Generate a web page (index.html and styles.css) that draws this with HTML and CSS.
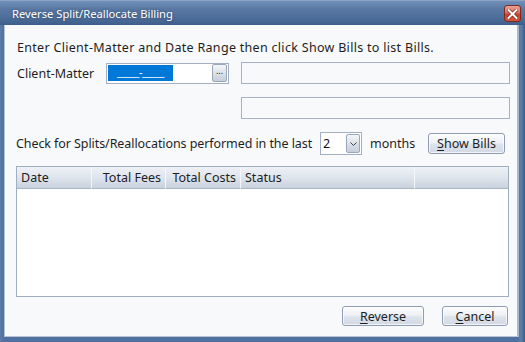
FILE: index.html
```html
<!DOCTYPE html>
<html lang="en">
<head>
    <meta charset="UTF-8">
    <title>Reverse Split/Reallocate Billing</title>
    <link rel="stylesheet" href="styles.css">
</head>
<body>
    <div class="window">
        <div class="titlebar">
            <span class="title">Reverse Split/Reallocate Billing</span>
            <span class="close">
                <svg width="11" height="10" viewBox="0 0 11 10">
                    <path d="M1.5 1 L9.5 9 M9.5 1 L1.5 9" stroke="#7a2418" stroke-width="3.4" stroke-linecap="square"/>
                    <path d="M1.5 1 L9.5 9 M9.5 1 L1.5 9" stroke="#fff" stroke-width="2" stroke-linecap="square"/>
                </svg>
            </span>
        </div>
        <div class="frame">
            <div class="content">
                <p class="intro">Enter Client-Matter and Date Range then click Show Bills to list Bills.</p>

                <div class="matter-row">
                    <span class="label">Client-Matter</span>
                    <div class="matter-input">
                        <span class="selection">_____-_____</span>
                        <span class="ellipsis">...</span>
                    </div>
                    <div class="textbox"></div>
                </div>

                <div class="second-row">
                    <div class="textbox"></div>
                </div>

                <div class="check-row">
                    <span class="check-label">Check for Splits/Reallocations performed in the last</span>
                    <div class="combo">
                        <span class="combo-value">2</span>
                        <span class="combo-drop">
                            <svg width="7" height="4" viewBox="0 0 7 4">
                                <path d="M0.5 0.5 L3.5 3.5 L6.5 0.5" fill="none" stroke="#3a4250" stroke-width="1"/>
                            </svg>
                        </span>
                    </div>
                    <span class="months">months</span>
                    <button class="btn btn-show"><u>S</u>how Bills</button>
                </div>

                <div class="listview">
                    <div class="lv-header">
                        <div class="col col-date">Date</div>
                        <div class="col col-fees">Total Fees</div>
                        <div class="col col-costs">Total Costs</div>
                        <div class="col col-status">Status</div>
                        <div class="col col-fill"></div>
                    </div>
                    <div class="lv-body"></div>
                </div>

                <div class="actions">
                    <button class="btn btn-reverse"><u>R</u>everse</button>
                    <button class="btn btn-cancel"><u>C</u>ancel</button>
                </div>
            </div>
        </div>
    </div>
</body>
</html>
```

FILE: styles.css
```css
body {
    margin: 0;
    font-family: "Noto Sans", "Open Sans", sans-serif;
    font-size: 12.5px;
    color: #1e1e1e;
}
.window {
    width: 525px;
    height: 342px;
    display: flex;
    flex-direction: column;
    background: #3f5f8c;
}
.titlebar {
    height: 25px;
    display: flex;
    align-items: center;
    justify-content: space-between;
    padding: 0 4px 0 12px;
    box-sizing: border-box;
    background: linear-gradient(#7290b8 0%, #5878a3 35%, #46669343 100%), linear-gradient(#5b7aa5, #3a5a88);
    border-top: 1px solid #8aa3c4;
}
.title {
    color: #fff;
    font-size: 11.2px;
    text-shadow: 0 0 3px rgba(20, 40, 70, 0.6);
    margin-top: 1px;
}
.close {
    width: 17px;
    height: 17px;
    border: 1px solid #7d2a20;
    border-radius: 3px;
    box-sizing: border-box;
    display: flex;
    align-items: center;
    justify-content: center;
    background: linear-gradient(#eba095 0%, #df6f60 45%, #c8402e 55%, #d0563f 100%);
    margin-top: 1px;
}
.frame {
    flex: 1;
    display: flex;
    padding: 0 6px 5px 4px;
    background: linear-gradient(90deg, #5c7ca6 0px, #5070a0 4px, #5070a0 calc(100% - 7px), #6080aa calc(100% - 4px), #3b5b89 100%);
}
.content {
    flex: 1;
    background: #f8f9fb;
    border-left: 1px solid #b4c2d6;
    border-right: 2px solid #a9b8cc;
    border-bottom: 1px solid #b8c5d6;
    padding: 15px 7px 0 11px;
    display: flex;
    flex-direction: column;
}
.intro {
    margin: 0 0 0 1px;
    line-height: 15px;
    height: 15px;
    letter-spacing: 0.3px;
    white-space: nowrap;
}
.matter-row {
    display: flex;
    align-items: center;
    margin-top: 7px;
    height: 22px;
}
.label {
    width: 89px;
    padding-left: 1px;
}
.matter-input {
    width: 123px;
    height: 21px;
    box-sizing: border-box;
    border: 1px solid #a3b0c2;
    background: #fff;
    display: flex;
    align-items: center;
    justify-content: space-between;
    padding: 0 1px 0 1px;
}
.selection {
    width: 65px;
    height: 16px;
    background: #0078d7;
    color: #fff;
    font-size: 11px;
    line-height: 14px;
    overflow: hidden;
    letter-spacing: -0.5px;
    text-align: center;
}
.ellipsis {
    width: 15px;
    height: 18px;
    box-sizing: border-box;
    border: 1px solid #9aa8bb;
    border-radius: 2px;
    background: linear-gradient(#f3f5f8, #c6ceda);
    font-size: 9px;
    line-height: 12px;
    text-align: center;
    color: #222;
}
.textbox {
    width: 269px;
    height: 22px;
    box-sizing: border-box;
    border: 1px solid #a4b2c6;
    background: #f8f9fb;
}
.matter-row .textbox {
    margin-left: 12px;
}
.second-row {
    margin-top: 13px;
    padding-left: 225px;
    height: 23px;
}
.check-row {
    display: flex;
    align-items: center;
    margin-top: 12px;
    height: 23px;
}
.check-label {
    width: 304px;
    white-space: nowrap;
    letter-spacing: -0.08px;
}
.combo {
    width: 42px;
    height: 23px;
    box-sizing: border-box;
    border: 1px solid #a3b0c2;
    background: #fff;
    display: flex;
    align-items: center;
    justify-content: space-between;
    padding: 0 1px 0 2px;
}
.combo-value {
    color: #111;
}
.combo-drop {
    width: 14px;
    height: 19px;
    box-sizing: border-box;
    border: 1px solid #9aa8bb;
    border-radius: 2px;
    background: linear-gradient(#f3f5f8, #c6ceda);
    display: flex;
    align-items: center;
    justify-content: center;
}
.months {
    margin-left: 8px;
}
.btn {
    font-family: inherit;
    font-size: 12.5px;
    color: #1e1e1e;
    border: 1px solid #8e9db3;
    border-radius: 3px;
    background: linear-gradient(#fbfcfd 0%, #eef1f5 45%, #dde3eb 55%, #d2d9e3 100%);
    box-shadow: inset 0 0 0 1px rgba(255, 255, 255, 0.7);
    padding: 0;
    height: 21px;
    line-height: 17px;
}
.btn u {
    text-decoration-thickness: 1px;
    text-underline-offset: 2px;
}
.btn-show {
    width: 77px;
    margin-left: auto;
    margin-right: 5px;
}
.listview {
    margin-top: 11px;
    width: 493px;
    height: 131px;
    box-sizing: border-box;
    border: 1px solid #a0aec2;
    background: #fff;
    display: flex;
    flex-direction: column;
}
.lv-header {
    height: 22px;
    display: flex;
    background: #f8f9fb;
}
.col {
    height: 22px;
    box-sizing: border-box;
    border-right: 1px solid #f4f6f9;
    border-bottom: 1px solid #a9b6c8;
    background: linear-gradient(#eef1f6 0%, #dfe5ed 50%, #c9d1dd 100%);
    line-height: 22px;
    padding: 0 4px;
    white-space: nowrap;
}
.col-date { width: 75px; }
.col-fees { width: 74px; text-align: right; }
.col-costs { width: 75px; text-align: right; }
.col-status { width: 174px; }
.col-fill { flex: 1; border-right: 0; }
.lv-body {
    flex: 1;
}
.actions {
    display: flex;
    justify-content: flex-end;
    gap: 18px;
    margin-top: 9px;
    padding-right: 2px;
}
.btn-reverse {
    width: 82px;
    height: 20px;
}
.btn-cancel {
    width: 66px;
    height: 20px;
}
```
